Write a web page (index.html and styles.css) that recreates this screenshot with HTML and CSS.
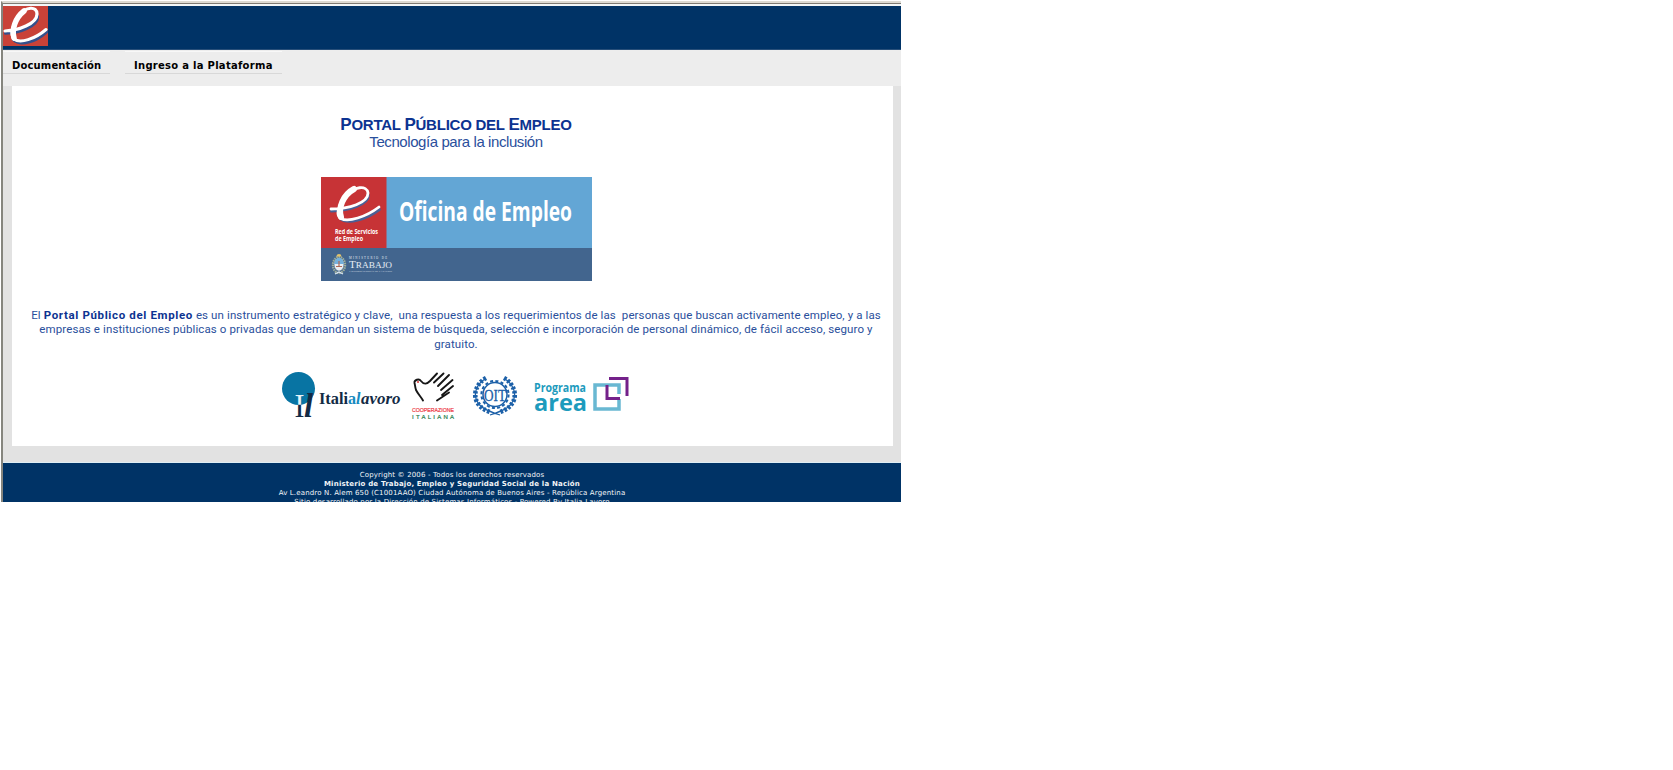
FILE: index.html
```html
<!DOCTYPE html>
<html lang="es">
<head>
<meta charset="utf-8">
<title>Portal Público del Empleo</title>
<link rel="stylesheet" href="styles.css">
</head>
<body>
<div class="window">
  <header class="header">
    <svg class="brand" viewBox="0 0 45 40" width="45" height="40">
      <rect width="45" height="40" fill="#c94238"/>
      <g transform="translate(1 1)" fill="none" stroke-linecap="round">
        <path d="M1 24.500C14 24 33 18 33 8M9 31C16 38 31 33 42 23" stroke="#34508c" stroke-width="3.200" transform="translate(.6 1.700)"/>
        <path d="M1 24C14 23.500 33 17 33 7C33-1 22-1 15 9C9 18 6 27 10 32" stroke="#fff" stroke-width="3.200"/>
        <path d="M20 4C11 11 7.500 23 10 31" stroke="#fff" stroke-width="5.500"/>
        <path d="M10 32C16 37 31 32 42 22.500" stroke="#fff" stroke-width="3"/>
      </g>
    </svg>
  </header>
  <nav class="menu">
    <a class="item first">Documentación</a>
    <a class="item second">Ingreso a la Plataforma</a>
  </nav>
  <main class="frame">
    <section class="content">
      <h1 class="title"><b>P</b>ORTAL <b>P</b>ÚBLICO DEL <b>E</b>MPLEO</h1>
      <p class="subtitle">Tecnología para la inclusión</p>
      <svg class="banner" viewBox="0 0 271 104" width="271" height="104">
        <rect width="271" height="104" fill="#42658e"/>
        <rect width="271" height="71" fill="#63a6d5"/>
        <rect width="65.500" height="71" fill="#c73336"/>
        <g transform="translate(9 9)" fill="none" stroke-linecap="round">
          <path d="M1 23.500C19 23 38 17 38 8M10 31C17 37 36 32 49 22" stroke="#4a5f95" stroke-width="2.800" transform="translate(.4 1.600)"/>
          <path d="M1 23C19 23 38 17 38 7C37-1 24 0 16 10C10 18 5 27 10 32" stroke="#fff" stroke-width="2.800"/>
          <path d="M24 3C13 9 8 22 11 31" stroke="#fff" stroke-width="6"/>
          <path d="M11 32.500C18 36.500 36 31 49 21" stroke="#fff" stroke-width="2.800"/>
        </g>
        <g class="condensed" fill="#fff">
          <text x="78" y="43.500" font-size="26" textLength="173" lengthAdjust="spacingAndGlyphs">Oficina de Empleo</text>
          <text x="14" y="57" font-size="6.600" textLength="43" lengthAdjust="spacingAndGlyphs">Red de Servicios</text>
          <text x="14" y="64" font-size="6.600" textLength="28" lengthAdjust="spacingAndGlyphs">de Empleo</text>
        </g>
        <g>
          <ellipse cx="18" cy="88" rx="6" ry="8" fill="none" stroke="#9fae9a" stroke-width="2.400" stroke-dasharray="1.500 .8"/>
          <ellipse cx="18" cy="87.500" rx="4.600" ry="6.200" fill="#e9eef2"/>
          <path d="M13.400 87a4.600 6.200 0 0 1 9.200 0z" fill="#74b0dc"/>
          <path d="M18 84v6M15 89.500h6" stroke="#b06a55" stroke-width="1.200"/>
          <path d="M15.500 79.500a2.500 2.500 0 0 1 5 0z" fill="#e3c36a"/>
          <path d="M14 97l4-2 4 2" stroke="#dce8f2" stroke-width="1.300" fill="none"/>
        </g>
        <g class="roman" fill="#e6edf4">
          <text x="28" y="81.500" font-size="3" textLength="38">MINISTERIO DE</text>
          <text x="28" y="90.500" font-size="9.500" textLength="43" lengthAdjust="spacingAndGlyphs">T<tspan font-size="8">RABAJO</tspan></text>
          <text x="28" y="95" font-size="2.800" textLength="43" lengthAdjust="spacingAndGlyphs">Y SEGURIDAD SOCIAL DE LA NACIÓN</text>
        </g>
      </svg>
      <p class="intro">El <b>Portal Público del Empleo</b> es un instrumento estratégico y clave,&nbsp; una respuesta a los requerimientos de las&nbsp; personas que buscan activamente empleo, y a las<br>empresas e instituciones públicas o privadas que demandan un sistema de búsqueda, selección e incorporación de personal dinámico, de fácil acceso, seguro y<br>gratuito.</p>
      <div class="partners">
        <svg class="italialavoro" viewBox="0 0 120 48" width="120" height="48">
          <defs>
            <linearGradient id="stem" gradientUnits="userSpaceOnUse" x1="0" y1="22" x2="0" y2="44">
              <stop offset=".47" stop-color="#e6f3f8"/>
              <stop offset=".5" stop-color="#132a45"/>
            </linearGradient>
          </defs>
          <circle cx="16.500" cy="16.500" r="16.500" fill="#0874a3"/>
          <g class="didone">
            <text x="12.500" y="44.500" font-size="34" textLength="10" lengthAdjust="spacingAndGlyphs" fill="url(#stem)" font-weight="normal">I</text>
            <text x="22" y="44.500" font-size="34" font-style="italic" textLength="9" lengthAdjust="spacingAndGlyphs" fill="#132a45">l</text>
            <text x="37" y="32" font-size="16" textLength="29" lengthAdjust="spacingAndGlyphs" fill="#132a45">Itali</text>
            <g font-style="italic" font-size="16">
              <text x="66" y="32" textLength="12.500" lengthAdjust="spacingAndGlyphs" fill="#168abf"><tspan font-style="normal">a</tspan>l</text>
              <text x="79" y="32" textLength="39.500" lengthAdjust="spacingAndGlyphs" fill="#132a45">avoro</text>
            </g>
          </g>
        </svg>
        <svg class="cooperazione" viewBox="0 0 44 48" width="44" height="48">
          <g fill="none" stroke="#161616" stroke-width="1.900" stroke-linecap="round" stroke-linejoin="round">
            <path d="M12 28.500C10 25 7 22 5 18C4 15 4 12 3.500 11C3 8 8 6 10 9C13 13 16 12 19 9L26 1.500"/>
            <path d="M23 10.500L32.500 1.500M27 14L38 3M30 18L41.500 8M31 23L42 14M26 28.500L38 20.500"/>
          </g>
          <circle cx="7" cy="10" r="1" fill="#d93131"/>
          <g class="grotesk" font-size="6">
            <text x="1" y="40" textLength="42" lengthAdjust="spacingAndGlyphs" fill="#ed3842" stroke="#ed3842" stroke-width=".2">COOPERAZIONE</text>
            <text x="1" y="47" textLength="42" fill="#27804d" stroke="#27804d" stroke-width=".2">ITALIANA</text>
          </g>
        </svg>
        <svg class="oit" viewBox="0 0 46 42" width="46" height="42">
          <g fill="none" stroke="#1c60a8">
            <circle cx="23" cy="19.500" r="12" stroke-width="1.500"/>
            <circle cx="23" cy="19.500" r="13.600" stroke-width="2" stroke-dasharray="3 2.340"/>
            <path d="M13 4C5 9 1 18 5 26C8 33 16 36 28 40M33 4C41 9 45 18 41 26C38 33 30 36 18 40" stroke-width="1.300"/>
            <path d="M14 3C5 8 1 18 4.500 26C7.500 32 12 35 18 37M32 3C41 8 45 18 41.500 26C38.500 32 34 35 28 37" stroke-width="4.600" stroke-dasharray="2.600 1.600"/>
          </g>
          <text class="roman" x="12" y="25.500" font-size="17.500" textLength="22" lengthAdjust="spacingAndGlyphs" fill="#1c60a8" stroke="#1c60a8" stroke-width=".3">OIT</text>
        </svg>
        <svg class="area" viewBox="0 0 96 38" width="96" height="38">
          <g class="humanist" fill="#1d9bbd">
            <text x="0" y="16" font-size="12" textLength="52" lengthAdjust="spacingAndGlyphs">Programa</text>
            <text x="0" y="35" font-size="24" textLength="53" lengthAdjust="spacingAndGlyphs">area</text>
          </g>
          <g fill="none" stroke-width="3.500">
            <path d="M75 9H61V33H85V23M75 9H85V18" stroke="#69b8d2"/>
            <path d="M75 2.500H93V20M73 9V22.500H86" stroke="#74218a" stroke-width="3"/>
          </g>
        </svg>
      </div>
    </section>
  </main>
  <footer class="footer">
    <p class="f1">Copyright © 2006 - Todos los derechos reservados</p>
    <p class="f2">Ministerio de Trabajo, Empleo y Seguridad Social de la Nación</p>
    <p class="f3">Av L.eandro N. Alem 650 (C1001AAO) Ciudad Autónoma de Buenos Aires - República Argentina</p>
    <p class="f4">Sitio desarrollado por la Dirección de Sistemas Informáticos - Powered By Italia Lavoro</p>
  </footer>
</div>
</body>
</html>
```
FILE: styles.css
```css
body { margin: 0; background: #fff; }
p, h1 { margin: 0; }
.window {
  box-sizing: border-box;
  width: 900px;
  height: 501px;
  margin: 1px 0 0 1px;
  overflow: hidden;
  border-left: 2px solid #85857e;
  border-top: 2px solid #dedbd3;
  display: flex;
  flex-direction: column;
}
.header {
  box-sizing: border-box;
  flex: none;
  height: 47px;
  border-top: 1px solid #7f7b74;
  border-bottom: 1px solid #284f79;
  padding-top: 2px;
  background: linear-gradient(#f3f7f8 2px, #003366 2px);
}
.brand { display: block; }
.menu {
  flex: none;
  display: flex;
  align-items: flex-start;
  gap: 15px;
  height: 35px;
  padding-top: 1px;
  background: #ededed;
  font: bold 10px/27px "DejaVu Sans", Verdana, sans-serif;
  color: #000;
}
.item {
  box-sizing: border-box;
  height: 23px;
  border-top: 1px solid #f8f8f8;
  border-bottom: 1px solid #d8d8d8;
  white-space: nowrap;
}
.first { width: 107px; padding-left: 9px; letter-spacing: 0.15px; }
.second { width: 157px; padding-left: 9px; letter-spacing: 0.28px; }
.frame {
  flex: none;
  height: 377px;
  box-sizing: border-box;
  padding: 0 8px 16px 9px;
  border-bottom: 1px solid #dfeef4;
  background: #e2e2e2;
}
.content {
  box-sizing: border-box;
  height: 360px;
  padding: 30px 0 0 7px;
  background: #fff;
  display: flex;
  flex-direction: column;
  align-items: center;
  font-family: "Liberation Sans", Arial, sans-serif;
  color: #2a4f9c;
}
.title { font-size: 15px; line-height: 18px; font-weight: bold; letter-spacing: -0.24px; color: #0c3391; white-space: nowrap; }
.title b { font-size: 17px; }
.subtitle { font-size: 15px; line-height: 15px; letter-spacing: -0.42px; white-space: nowrap; }
.banner { margin-top: 28px; }
.intro { margin-top: 27px; font: 11.5px/14.4px Roboto, "Liberation Sans", sans-serif; text-align: center; white-space: nowrap; letter-spacing: 0.11px; }
.intro b { color: #0c3391; letter-spacing: 0.64px; }
.partners { display: flex; align-items: flex-start; height: 50px; margin-top: 20.8px; padding-right: 1px; }
.cooperazione { margin-left: 9px; }
.oit { margin: 3px 0 0 17px; }
.area { margin: 4px 0 0 16px; }
.condensed { font-family: "Open Sans", sans-serif; font-weight: bold; }
.roman { font-family: "Liberation Serif", serif; }
.didone { font-family: "Liberation Serif", serif; font-weight: bold; }
.grotesk { font-family: "Liberation Sans", sans-serif; }
.humanist { font-family: "Open Sans", sans-serif; font-weight: bold; }
.footer {
  flex: 1;
  min-height: 0;
  overflow: hidden;
  padding-top: 8px;
  background: #003366;
  color: #f2f5f8;
  text-align: center;
  font: 7px/9px "DejaVu Sans", Verdana, sans-serif;
  letter-spacing: 0.15px;
  white-space: nowrap;
}
.f2 { font-weight: bold; letter-spacing: 0.19px; }
```
